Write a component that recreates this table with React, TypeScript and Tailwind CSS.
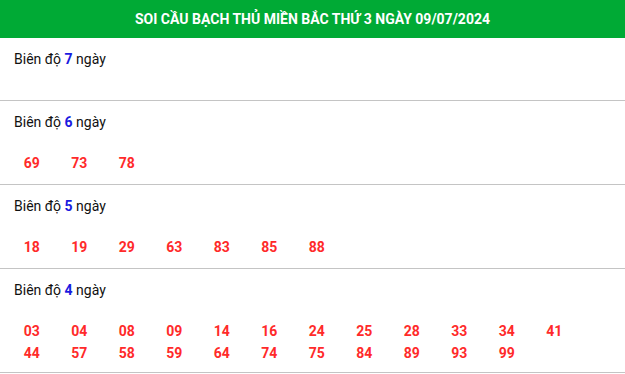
const sections = [
  { days: 7, nums: [] as string[] },
  { days: 6, nums: ["69", "73", "78"] },
  { days: 5, nums: ["18", "19", "29", "63", "83", "85", "88"] },
  {
    days: 4,
    nums: [
      "03", "04", "08", "09", "14", "16", "24", "25", "28", "33", "34", "41",
      "44", "57", "58", "59", "64", "74", "75", "84", "89", "93", "99",
    ],
  },
]

export default function App() {
  return (
    <div className="w-[625px] bg-white font-['Roboto',sans-serif] text-[14px]">
      <div className="h-[38px] bg-[#00aa35] flex items-center justify-center">
        <h1 className="text-white font-bold text-[14px] whitespace-nowrap">
          SOI CẦU BẠCH THỦ MIỀN BẮC THỨ 3 NGÀY 09/07/2024
        </h1>
      </div>
      {sections.map((s, i) => (
        <div key={s.days} className="border-b border-[#c4c4c4]">
          <div className="pl-[14px] pt-[11px] leading-[20px] text-[#111]">
            Biên độ <span className="text-[#1a1ae0] font-bold">{s.days}</span> ngày
          </div>
          <div
            className={
              i === sections.length - 1
                ? "pt-[20px] pb-[8px] pl-[8px] min-h-[1px] grid grid-cols-[repeat(12,47.5px)]"
                : "pt-[20px] pb-[10px] pl-[8px] min-h-[31px] grid grid-cols-[repeat(12,47.5px)]"
            }
          >
            {s.nums.map((n) => (
              <span key={n} className="leading-[22px] text-center text-[#ff2a2a] font-bold">
                {n}
              </span>
            ))}
          </div>
        </div>
      ))}
    </div>
  )
}
